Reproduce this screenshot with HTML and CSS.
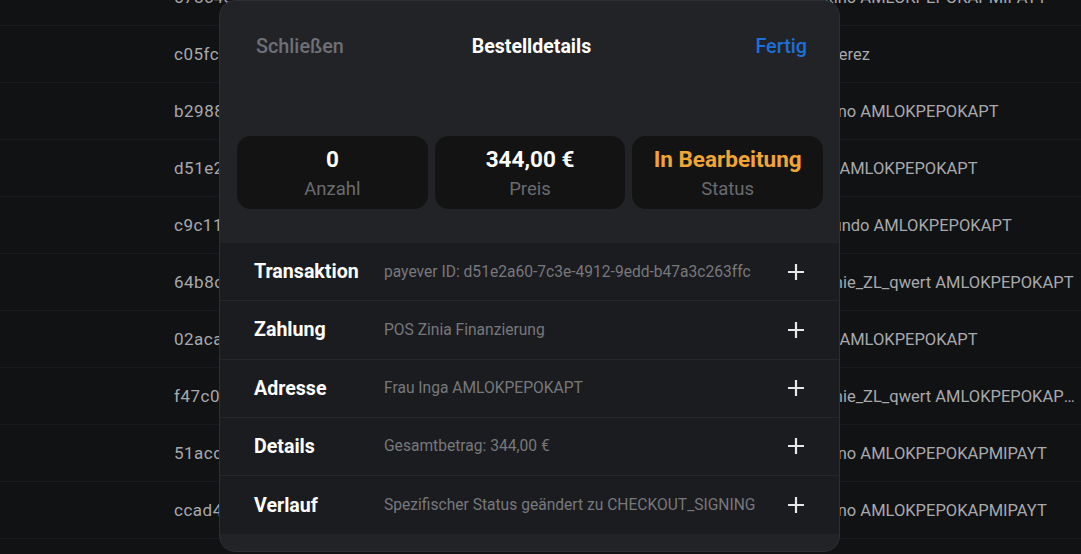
FILE: index.html
```html
<!DOCTYPE html>
<html lang="de">
<head>
<meta charset="utf-8">
<title>Bestelldetails</title>
<link rel="stylesheet" href="styles.css">
</head>
<body>
<div class="table">
  <div class="row"><span class="id">578c4e21-0a6b-4f3d-9b1e-2d7a3c91aa01</span><span class="name">Florentino AMLOKPEPOKAPMIPAYT</span></div>
  <div class="row"><span class="id">c05fc7a2-6e11-4a0b-8c4d-71f2b3e09b12</span><span class="name">Maria Perez</span></div>
  <div class="row"><span class="id">b2988f13-2d4c-4e6a-a5b7-93c1d0e7fa23</span><span class="name">Florentino AMLOKPEPOKAPT</span></div>
  <div class="row"><span class="id">d51e2a60-7c3e-4912-9edd-b47a3c263ffc</span><span class="name">Martha AMLOKPEPOKAPT</span></div>
  <div class="row"><span class="id">c9c11b54-8f2a-4d7e-b1c3-0a6e5f4d3c45</span><span class="name">Sigismundo AMLOKPEPOKAPT</span></div>
  <div class="row"><span class="id">64b8c2e6-1a9d-4b3f-8e0c-5d7f2a1b6c56</span><span class="name">Stephanie_ZL_qwert AMLOKPEPOKAPT</span></div>
  <div class="row"><span class="id">02aca7d8-3b5e-4f1a-9c2d-6e8f0a3b7d67</span><span class="name">Martha AMLOKPEPOKAPT</span></div>
  <div class="row"><span class="id">f47c0e19-4c6f-4a2b-8d3e-7f9a1b4c8e78</span><span class="name">Stephanie_ZL_qwert AMLOKPEPOKAPMIPAYT</span></div>
  <div class="row"><span class="id">51acc3f2-5d7a-4b3c-9e4f-8a0b2c5d9f89</span><span class="name">Florentino AMLOKPEPOKAPMIPAYT</span></div>
  <div class="row"><span class="id">ccad4b03-6e8b-4c4d-8f5a-9b1c3d6e0a90</span><span class="name">Florentino AMLOKPEPOKAPMIPAYT</span></div>
</div>

<div class="modal">
  <div class="modal-header">
    <span class="btn-close">Schließen</span>
    <span class="title">Bestelldetails</span>
    <span class="btn-done">Fertig</span>
  </div>
  <div class="stats">
    <div class="stat"><div class="stat-value">0</div><div class="stat-label">Anzahl</div></div>
    <div class="stat"><div class="stat-value">344,00 €</div><div class="stat-label">Preis</div></div>
    <div class="stat"><div class="stat-value status">In Bearbeitung</div><div class="stat-label">Status</div></div>
  </div>
  <div class="sections">
    <div class="section"><span class="sec-label">Transaktion</span><span class="sec-value">payever ID: d51e2a60-7c3e-4912-9edd-b47a3c263ffc</span><svg class="plus" viewBox="0 0 18 18"><path d="M9 1v16M1 9h16"/></svg></div>
    <div class="section"><span class="sec-label">Zahlung</span><span class="sec-value">POS Zinia Finanzierung</span><svg class="plus" viewBox="0 0 18 18"><path d="M9 1v16M1 9h16"/></svg></div>
    <div class="section"><span class="sec-label">Adresse</span><span class="sec-value">Frau Inga AMLOKPEPOKAPT</span><svg class="plus" viewBox="0 0 18 18"><path d="M9 1v16M1 9h16"/></svg></div>
    <div class="section"><span class="sec-label">Details</span><span class="sec-value">Gesamtbetrag: 344,00 €</span><svg class="plus" viewBox="0 0 18 18"><path d="M9 1v16M1 9h16"/></svg></div>
    <div class="section"><span class="sec-label">Verlauf</span><span class="sec-value">Spezifischer Status geändert zu CHECKOUT_SIGNING</span><svg class="plus" viewBox="0 0 18 18"><path d="M9 1v16M1 9h16"/></svg></div>
  </div>
</div>
</body>
</html>
```
FILE: styles.css
```css
* { box-sizing: border-box; }
html, body {
  margin: 0;
  padding: 0;
  background: #111214;
  width: 1081px;
  height: 554px;
  overflow: hidden;
  font-family: Roboto, "Liberation Sans", sans-serif;
}

.table {
  margin-top: -31px;
}
.row {
  height: 57px;
  border-bottom: 1px solid #1a1b1e;
  display: flex;
  align-items: center;
  padding-left: 174px;
  font-size: 16.5px;
  color: #a8a9ac;
}
.id {
  width: 608.5px;
  white-space: nowrap;
  overflow: hidden;
  font-size: 17px;
  letter-spacing: 0.5px;
}
.name {
  width: 295px;
  white-space: nowrap;
  overflow: hidden;
  text-overflow: ellipsis;
}

.modal {
  position: absolute;
  left: 219px;
  top: 0;
  width: 621px;
  height: 552px;
  background: #222327;
  border: 1px solid #2d2e33;
  border-radius: 16px;
  overflow: hidden;
  display: flex;
  flex-direction: column;
}

.modal-header {
  height: 90px;
  display: grid;
  grid-template-columns: 1fr auto 1fr;
  align-items: center;
  padding: 0 32px 0 36px;
  font-size: 19.8px;
}
.btn-close { color: #6f7075; font-weight: 500; justify-self: start; }
.title { color: #ffffff; font-weight: 700; font-size: 19.5px; justify-self: center; }
.btn-done { color: #1f6fd8; font-weight: 500; justify-self: end; }

.stats {
  margin-top: 45px;
  display: flex;
  gap: 7px;
  padding: 0 16px 0 17px;
}
.stat {
  flex: 1;
  height: 73px;
  padding-top: 1px;
  background: #131314;
  border-radius: 14px;
  display: flex;
  flex-direction: column;
  align-items: center;
  justify-content: center;
  gap: 6px;
}
.stat-value {
  color: #ffffff;
  font-weight: 700;
  font-size: 22.5px;
  line-height: 26px;
}
.stat-value.status { color: #f0a535; }
.stat-label {
  color: #6a6b6f;
  font-size: 18.5px;
  line-height: 22px;
}

.sections {
  margin-top: 34px;
  background: #1b1c1f;
}
.section {
  height: 58.25px;
  display: flex;
  align-items: center;
  padding: 0 34px 0 34px;
  border-bottom: 1px solid #26272b;
}
.section:last-child { border-bottom: none; }
.sec-label {
  width: 130px;
  color: #ffffff;
  font-weight: 700;
  font-size: 19.6px;
}
.sec-value {
  flex: 1;
  color: #77787c;
  font-size: 15.6px;
  white-space: nowrap;
}
.plus {
  width: 18px;
  height: 18px;
  stroke: #e8e8e8;
  stroke-width: 2.2;
  fill: none;
}
```
